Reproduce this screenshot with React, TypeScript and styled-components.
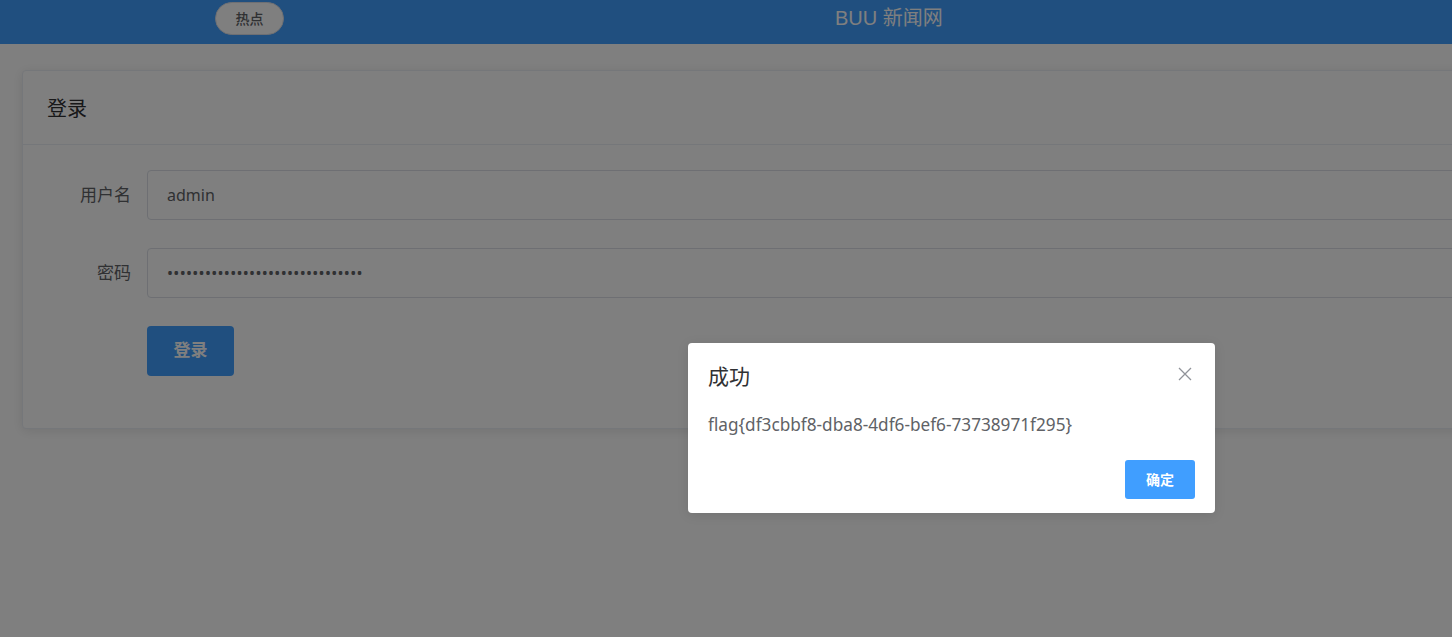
import React from "react";
import styled, { createGlobalStyle } from "styled-components";

const GlobalStyle = createGlobalStyle`
  html, body {
    margin: 0;
    padding: 0;
    overflow: hidden;
    background: #fff;
  }
  * {
    box-sizing: border-box;
  }
`;

const Page = styled.div`
  position: relative;
  width: 1903px;
  height: 637px;
  font-family: "Noto Sans", "Noto Sans CJK SC", sans-serif;
  color: #303133;
`;

const Header = styled.header`
  display: flex;
  align-items: flex-start;
  gap: 551px;
  height: 44px;
  padding: 2px 0 0 215px;
  background: #409eff;
`;

const HotButton = styled.button`
  height: 33px;
  width: 69px;
  padding: 0 0 2px 0;
  border: 1px solid #dcdfe6;
  border-radius: 17px;
  background: #fff;
  color: #606266;
  font-family: "Noto Sans CJK SC", sans-serif;
  font-size: 14px;
  font-weight: 500;
`;

const SiteTitle = styled.div`
  margin-top: 4px;
  font-family: "Liberation Sans", "Noto Sans CJK SC", sans-serif;
  font-size: 20px;
  line-height: 24px;
  color: #fff;
`;

const Main = styled.main`
  padding: 26px 22px 0 22px;
`;

const Card = styled.section`
  border: 1px solid #ebeef5;
  border-radius: 4px;
  background: #fff;
  box-shadow: 0 2px 12px 0 rgba(0, 0, 0, 0.1);
`;

const CardHeader = styled.div`
  height: 74px;
  display: flex;
  align-items: center;
  padding: 0 24px;
  border-bottom: 1px solid #ebeef5;
  font-family: "Noto Sans CJK SC", sans-serif;
  font-size: 20px;
  color: #303133;
`;

const CardBody = styled.div`
  display: flex;
  flex-direction: column;
  gap: 28px;
  padding: 25px 0 52px 0;
`;

const FormRow = styled.div`
  display: flex;
  align-items: center;
`;

const Label = styled.label`
  width: 124px;
  padding: 0 16px 3px 0;
  text-align: right;
  font-family: "Noto Sans CJK SC", sans-serif;
  font-size: 17px;
  color: #606266;
`;

const Input = styled.input<{ $spacing?: number }>`
  flex: 1;
  height: 50px;
  padding: 0 19px;
  border: 1px solid #dcdfe6;
  border-radius: 4px;
  background: #fff;
  font-family: "Noto Sans", sans-serif;
  font-size: 16px;
  letter-spacing: ${(p) => p.$spacing ?? 0}px;
  color: #606266;
  outline: none;
`;

const SubmitButton = styled.button`
  margin-left: 124px;
  width: 87px;
  height: 50px;
  padding: 0 0 5px 0;
  border: none;
  border-radius: 4px;
  background: #409eff;
  color: #fff;
  font-family: "Noto Sans CJK SC", sans-serif;
  font-size: 17px;
  font-weight: 700;
`;

const Mask = styled.div`
  position: absolute;
  inset: 0;
  background: rgba(0, 0, 0, 0.5);
`;

const Dialog = styled.div`
  position: absolute;
  left: 688px;
  top: 343px;
  width: 527px;
  height: 170px;
  display: flex;
  flex-direction: column;
  padding: 18px 20px 14px 20px;
  border-radius: 4px;
  background: #fff;
  box-shadow: 0 2px 12px 0 rgba(0, 0, 0, 0.1);
`;

const DialogHead = styled.div`
  display: flex;
  justify-content: space-between;
  align-items: center;
  height: 28px;
`;

const DialogTitle = styled.span`
  font-family: "Noto Sans CJK SC", sans-serif;
  font-size: 21px;
  color: #303133;
`;

const CloseIcon = styled.svg`
  width: 14px;
  height: 14px;
  margin-right: 3px;
  margin-top: -3px;
`;

const Message = styled.p`
  margin: 24px 0 0 0;
  font-family: "Noto Sans", sans-serif;
  font-size: 17.2px;
  line-height: 24px;
  color: #606266;
`;

const DialogFooter = styled.div`
  margin-top: auto;
  display: flex;
  justify-content: flex-end;
`;

const ConfirmButton = styled.button`
  width: 70px;
  height: 39px;
  padding: 0 0 2px 0;
  border: none;
  border-radius: 3px;
  background: #409eff;
  color: #fff;
  font-family: "Noto Sans CJK SC", sans-serif;
  font-size: 14px;
  font-weight: 700;
`;

const App: React.FC = () => {
  return (
    <>
      <GlobalStyle />
      <Page>
        <Header>
          <HotButton>热点</HotButton>
          <SiteTitle>BUU 新闻网</SiteTitle>
        </Header>
        <Main>
          <Card>
            <CardHeader>登录</CardHeader>
            <CardBody>
              <FormRow>
                <Label>用户名</Label>
                <Input defaultValue="admin" />
              </FormRow>
              <FormRow>
                <Label>密码</Label>
                <Input
                  type="password"
                  $spacing={0.3}
                  defaultValue="0123456789012345678901234567890"
                />
              </FormRow>
              <FormRow>
                <SubmitButton>登录</SubmitButton>
              </FormRow>
            </CardBody>
          </Card>
        </Main>
        <Mask />
        <Dialog>
          <DialogHead>
            <DialogTitle>成功</DialogTitle>
            <CloseIcon viewBox="0 0 14 14">
              <path d="M1 1 L13 13 M13 1 L1 13" stroke="#909399" strokeWidth="1.3" fill="none" />
            </CloseIcon>
          </DialogHead>
          <Message>flag{"{"}df3cbbf8-dba8-4df6-bef6-73738971f295{"}"}</Message>
          <DialogFooter>
            <ConfirmButton>确定</ConfirmButton>
          </DialogFooter>
        </Dialog>
      </Page>
    </>
  );
};

export default App;
